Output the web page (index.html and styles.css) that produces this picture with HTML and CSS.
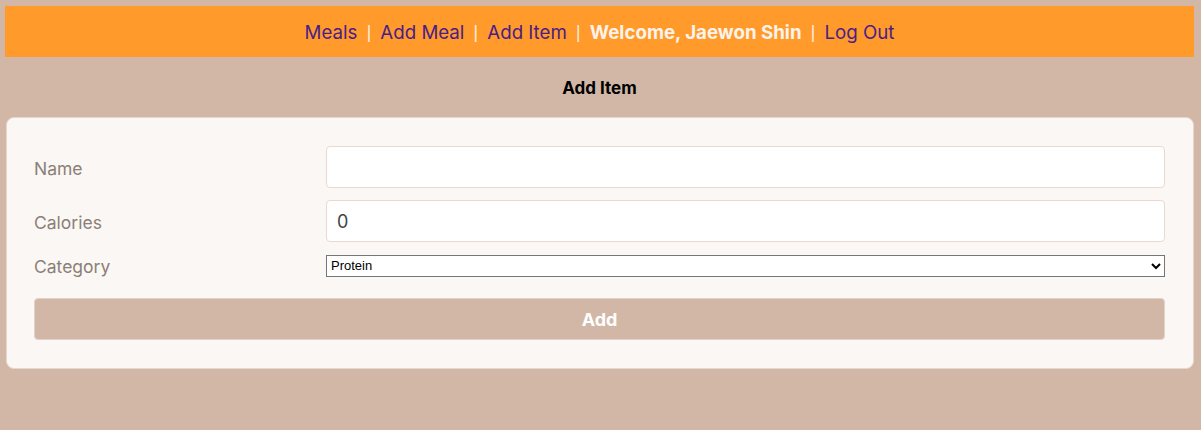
FILE: index.html
```html
<!DOCTYPE html>
<html lang="en">
<head>
<meta charset="utf-8">
<title>Add Item</title>
<link rel="stylesheet" href="styles.css">
</head>
<body>
<nav class="nav">
  <a class="nav-link" href="#">Meals</a>
  <span class="sep">|</span>
  <a class="nav-link" href="#">Add Meal</a>
  <span class="sep">|</span>
  <a class="nav-link" href="#">Add Item</a>
  <span class="sep">|</span>
  <span class="welcome">Welcome, Jaewon Shin</span>
  <span class="sep">|</span>
  <a class="nav-link" href="#">Log Out</a>
</nav>
<h2 class="title">Add Item</h2>
<form class="card">
  <div class="row">
    <label class="label" for="name">Name</label>
    <input class="field" id="name" type="text" value="">
  </div>
  <div class="row">
    <label class="label" for="cal">Calories</label>
    <input class="field" id="cal" type="text" value="0">
  </div>
  <div class="row row-select">
    <label class="label" for="cat">Category</label>
    <select class="select" id="cat">
      <option>Protein</option>
      <option>Carbohydrate</option>
      <option>Fat</option>
    </select>
  </div>
  <button class="btn" type="button">Add</button>
</form>
</body>
</html>
```
FILE: styles.css
```css
html, body {
  background: #d2b7a6;
}
body {
  margin: 6px 7px 0 5px;
  font-family: Inter, "Noto Sans", sans-serif;
}
.nav {
  height: 51px;
  background: #ff9a2b;
  display: flex;
  align-items: center;
  justify-content: center;
  gap: 9px;
  font-size: 18.7px;
  padding-top: 1px;
  box-sizing: border-box;
}
.nav-link {
  color: #4a2088;
  text-decoration: none;
}
.sep {
  color: #fde8d2;
  font-size: 19px;
  font-family: "Liberation Sans", Arial, sans-serif;
}
.welcome {
  color: #fdf3ea;
  font-weight: 700;
}
.title {
  margin: 0;
  padding: 21px 0 19px;
  text-align: center;
  font-size: 17px;
  line-height: 20px;
  font-weight: 700;
  color: #000;
}
.card {
  margin: 0 0 0 1px;
  background: #fbf7f4;
  border: 1px solid #e7d8ce;
  border-radius: 8px;
  padding: 28px 28px 28px 27px;
  display: flex;
  flex-direction: column;
}
.row {
  display: grid;
  grid-template-columns: 292px 1fr;
  align-items: center;
  margin-bottom: 12px;
}
.row-select {
  margin-top: 0;
  margin-bottom: 21px;
}
.label {
  font-size: 17.5px;
  color: #8a8077;
  padding-left: 0;
  padding-top: 2px;
}
.field {
  box-sizing: border-box;
  height: 42px;
  border: 1px solid #ead9ce;
  border-radius: 4px;
  background: #fff;
  padding: 0 10px;
  font-family: Inter, "Noto Sans", sans-serif;
  font-size: 18px;
  color: #444;
  outline: none;
}
.select {
  box-sizing: border-box;
  height: 22px;
  border: 1px solid #767676;
  border-radius: 0;
  background: #fff;
  font-family: "Liberation Sans", Arial, sans-serif;
  font-size: 13px;
  color: #000;
}
.btn {
  height: 42px;
  background: #d2b7a6;
  border: 1px solid #e2d2c7;
  border-radius: 4px;
  color: #fff;
  font-family: Inter, "Noto Sans", sans-serif;
  font-size: 18px;
  font-weight: 700;
}
```
